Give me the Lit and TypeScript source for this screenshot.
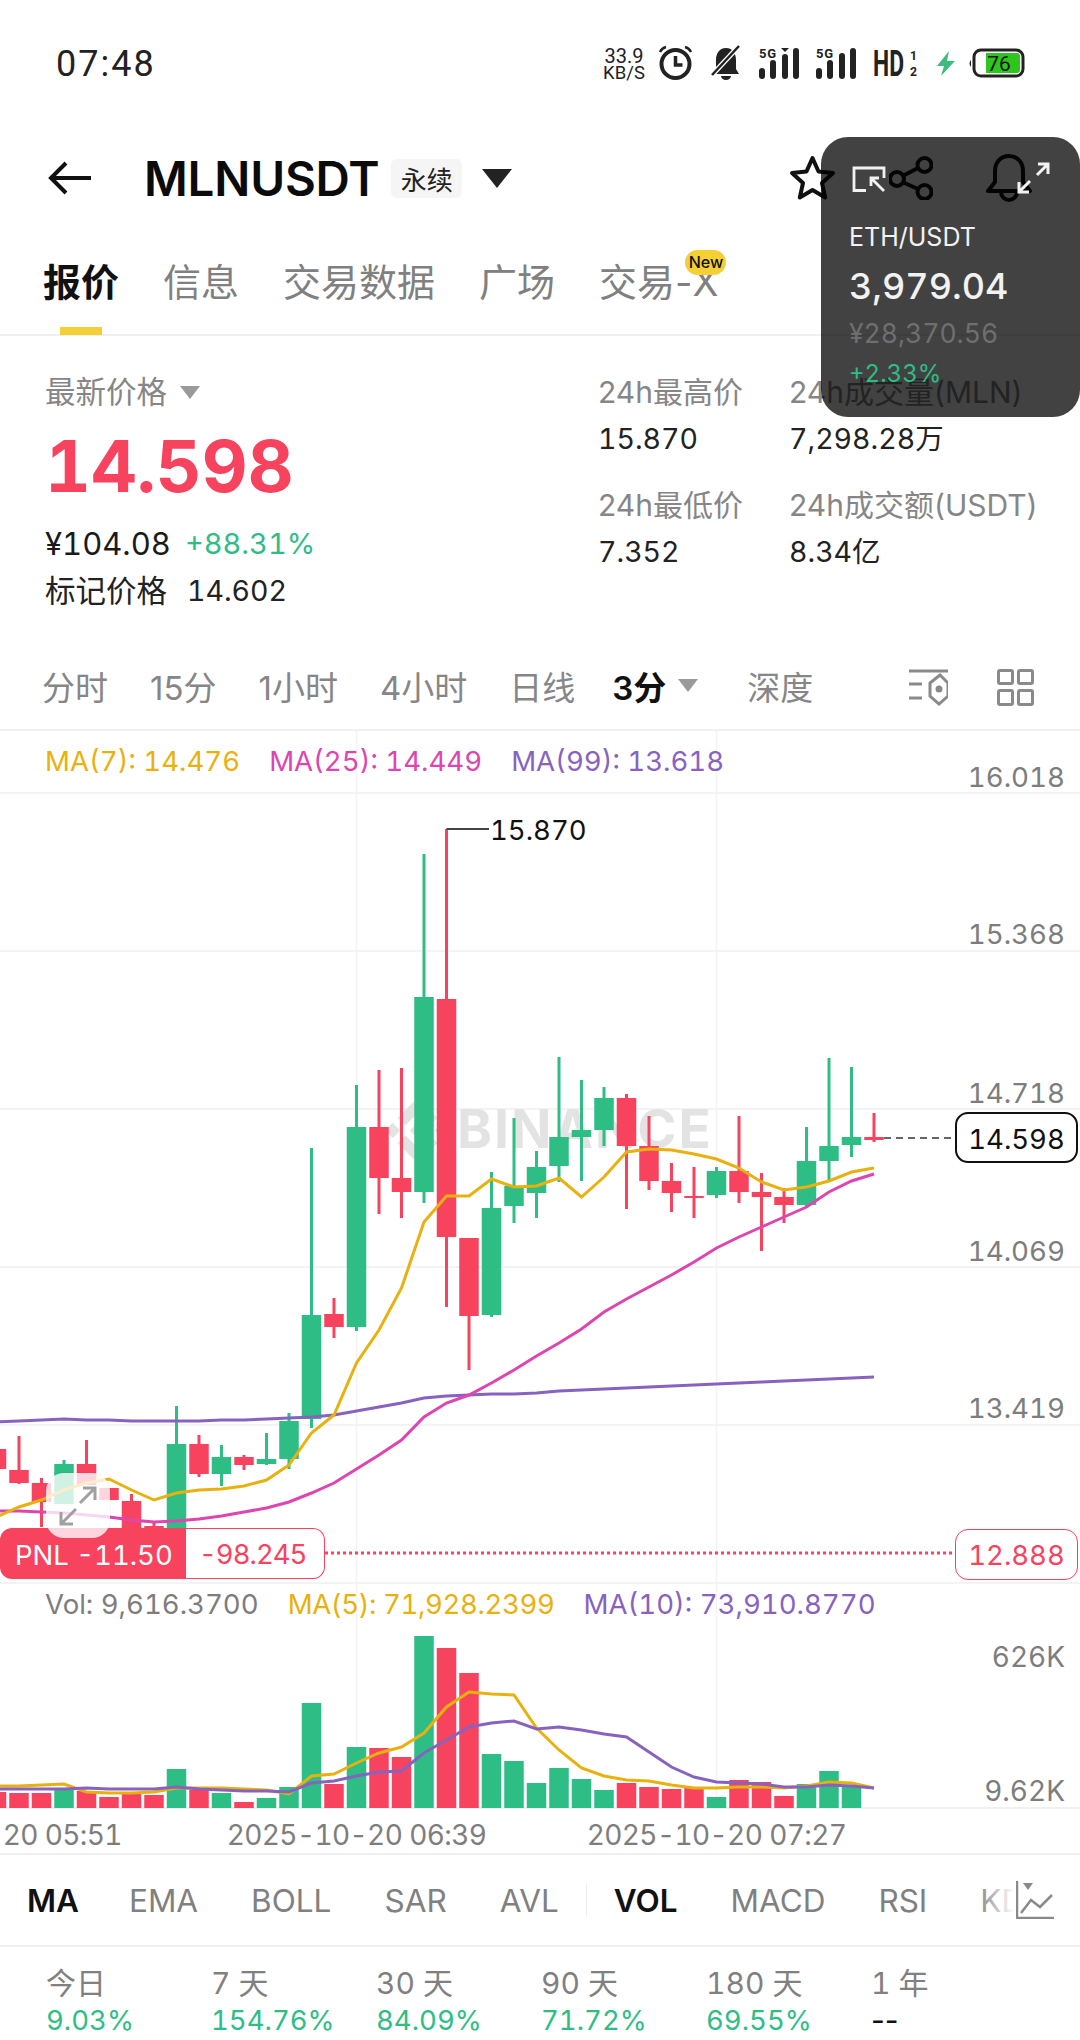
import { LitElement, html, css, svg } from 'lit';
import { customElement } from 'lit/decorators.js';

const GREEN = '#2ebd85';
const RED = '#f8435f';
const YELLOW = '#e8b10f';
const PINK = '#dd45b0';
const PURPLE = '#8763bf';

// index 0 is the newest bar, x runs right to left. y values are page pixels.
const xAt = (k: number) => 874 - 22.5 * k;

// [wick top, body top, body bottom, wick bottom, up]
const CANDLES: [number, number, number, number, boolean][] = [
  [1113, 1137, 1140, 1142, false],
  [1067, 1137, 1145, 1157, true],
  [1058, 1146, 1161, 1180, true],
  [1127, 1161, 1205, 1208, true],
  [1188, 1197, 1205, 1223, false],
  [1173, 1192, 1197, 1251, false],
  [1116, 1171, 1192, 1203, false],
  [1167, 1171, 1195, 1198, true],
  [1167, 1196, 1198, 1218, false],
  [1163, 1181, 1193, 1212, false],
  [1116, 1146, 1181, 1190, false],
  [1094, 1098, 1146, 1209, false],
  [1087, 1098, 1130, 1146, true],
  [1080, 1130, 1137, 1181, true],
  [1057, 1137, 1166, 1182, true],
  [1151, 1167, 1193, 1218, true],
  [1118, 1186, 1206, 1223, true],
  [1172, 1208, 1315, 1317, true],
  [1238, 1238, 1316, 1370, false],
  [829, 999, 1237, 1307, false],
  [854, 997, 1192, 1203, true],
  [1068, 1178, 1192, 1218, false],
  [1070, 1127, 1178, 1214, false],
  [1085, 1127, 1327, 1331, true],
  [1298, 1314, 1327, 1338, false],
  [1148, 1315, 1419, 1428, true],
  [1413, 1421, 1459, 1469, true],
  [1433, 1459, 1464, 1465, true],
  [1455, 1457, 1465, 1470, false],
  [1445, 1457, 1474, 1486, true],
  [1435, 1444, 1474, 1477, false],
  [1406, 1444, 1528, 1528, true],
  [1523, 1526, 1528, 1528, false],
  [1494, 1501, 1528, 1528, false],
  [1488, 1488, 1500, 1500, false],
  [1440, 1464, 1485, 1485, false],
  [1460, 1464, 1504, 1504, true],
  [1478, 1483, 1502, 1527, false],
  [1436, 1470, 1483, 1484, false],
  [1440, 1449, 1469, 1470, false],
];

const MA7 = [1168, 1172, 1181, 1187, 1190, 1182, 1168, 1159, 1154, 1150, 1149, 1152, 1177, 1197, 1178, 1186, 1187, 1179, 1196, 1196, 1222, 1288, 1330, 1363, 1415, 1433, 1465, 1480, 1486, 1489, 1490, 1493, 1500, 1490, 1479, 1483, 1490, 1500, 1507, 1517];
const MA25 = [1174, 1181, 1192, 1207, 1217, 1227, 1237, 1248, 1262, 1275, 1287, 1299, 1312, 1329, 1343, 1356, 1370, 1383, 1395, 1403, 1417, 1440, 1455, 1469, 1483, 1493, 1502, 1508, 1512, 1516, 1519, 1521, 1522, 1520, 1517, 1515, 1513, 1512, 1511, 1511];
const MA99 = [1377, 1378, 1379, 1380, 1381, 1382, 1383, 1384, 1385, 1386, 1387, 1388, 1389, 1390, 1391, 1393, 1394, 1394, 1395, 1396, 1398, 1403, 1407, 1411, 1415, 1417, 1418, 1419, 1420, 1420, 1421, 1421, 1421, 1421, 1420, 1420, 1419, 1420, 1421, 1422];

const VOL = [1808, 1786, 1771, 1784, 1796, 1782, 1780, 1797, 1787, 1789, 1787, 1783, 1790, 1779, 1768, 1783, 1761, 1754, 1673, 1648, 1636, 1757, 1748, 1747, 1784, 1703, 1787, 1798, 1802, 1793, 1790, 1769, 1795, 1792, 1797, 1791, 1790, 1793, 1793, 1792];
const VOL_MA5 = [1788, 1783, 1782, 1786, 1788, 1787, 1787, 1788, 1788, 1785, 1781, 1780, 1776, 1768, 1750, 1728, 1695, 1694, 1692, 1707, 1733, 1747, 1753, 1763, 1774, 1776, 1794, 1790, 1789, 1788, 1788, 1788, 1792, 1793, 1793, 1792, 1784, 1785, 1786, 1786];
const VOL_MA10 = [1788, 1786, 1785, 1787, 1787, 1784, 1783, 1782, 1777, 1767, 1752, 1737, 1734, 1730, 1727, 1729, 1721, 1723, 1727, 1740, 1753, 1771, 1772, 1776, 1781, 1783, 1792, 1791, 1791, 1790, 1789, 1787, 1789, 1789, 1789, 1788, 1789, 1789, 1789, 1789];

const GRID_Y = [793, 951, 1109, 1267, 1425, 1583];
const PRICE_LABELS: [string, number][] = [['16.018', 777], ['15.368', 934], ['14.718', 1093], ['14.069', 1251], ['13.419', 1408]];
const DATES: [string, number][] = [['2025-10-20 05:51', -8], ['2025-10-20 06:39', 356.5], ['2025-10-20 07:27', 716.5]];

const linePts = (ys: number[]) => ys.map((y, k) => `${xAt(k)},${y}`).join(' ');

@customElement('app-root')
export class AppRoot extends LitElement {
  static styles = css`
    :host {
      display: block;
      position: relative;
      width: 1080px;
      height: 2040px;
      overflow: hidden;
      background: #fff;
      color: #111;
      font-family: Inter, 'Noto Sans CJK SC', sans-serif;
      font-variant-numeric: tabular-nums;
    }
    svg { display: block; }

    .status {
      height: 126px;
      display: flex;
      align-items: center;
      padding: 1px 0 0 56px;
      box-sizing: border-box;
    }
    .clock { font: 400 36px/1 Roboto, sans-serif; letter-spacing: 2px; color: #222; }
    .status-icons { position: absolute; left: 0; top: 0; }

    .header {
      height: 104px;
      display: flex;
      align-items: center;
      padding: 0 48px;
    }
    .title { margin-left: 52px; font-size: 47.5px; font-weight: 600; color: #0b0b0b; letter-spacing: -0.2px; }
    .tag {
      margin-left: 12px;
      width: 71px;
      height: 39px;
      display: flex;
      align-items: center;
      justify-content: center;
      background: #f5f5f5;
      border-radius: 6px;
      font-size: 26px;
      color: #222;
    }
    .caret { margin-left: 20px; }
    .actions { margin-left: auto; display: flex; align-items: center; gap: 53px; }

    .tabs {
      height: 106px;
      display: flex;
      gap: 44px;
      padding: 0 0 6px 43px;
      border-bottom: 2px solid #f0f0f0;
      box-sizing: border-box;
      align-items: center;
      font-size: 38px;
      font-variant-numeric: normal;
      color: #808080;
    }
    .tab { position: relative; }
    .tab.on { color: #111; font-weight: 700; }
    .tab.on::after {
      content: '';
      position: absolute;
      left: 17px;
      bottom: -28px;
      width: 42px;
      height: 8px;
      background: #f5cf36;
    }
    .new {
      position: absolute;
      right: -8px;
      top: -2px;
      width: 41px;
      height: 25px;
      border-radius: 13px;
      background: #f5cf36;
      color: #111;
      font-size: 16px;
      font-weight: 500;
      line-height: 25px;
      text-align: center;
    }

    .summary {
      height: 306px;
      box-sizing: border-box;
      display: flex;
      padding: 36px 0 0 45px;
    }
    .main { width: 554px; }
    .muted { color: #868686; font-size: 30px; font-variant-numeric: normal; line-height: 40px; white-space: nowrap; }
    .latest { display: flex; align-items: center; gap: 13px; font-size: 30.5px; }
    .price { margin-top: 12px; font-size: 71px; line-height: 84px; font-weight: 700; }
    .fiat { margin-top: 18px; display: flex; align-items: center; gap: 14px; font-size: 31px; line-height: 36px; color: #1a1a1a; }
    .fiat .chg-day { font-size: 29px; }
    .mark { margin-top: 11px; display: flex; gap: 20px; align-items: center; line-height: 36px; font-size: 30.5px; color: #222; }
    .mark b { font-weight: 400; font-size: 28.5px; }
    .stats { display: grid; grid-template-columns: 191px 1fr; margin-left: -1px; }
    .stat-val { margin-top: 7px; margin-bottom: 26px; font-size: 28.5px; line-height: 40px; color: #222; }

    .periods {
      height: 89px;
      box-sizing: border-box;
      display: flex;
      align-items: center;
      gap: 42px;
      padding: 0 46px 0 42px;
      border-bottom: 2px solid #f0f0f0;
      font-size: 33px;
      font-variant-numeric: normal;
      color: #868686;
    }
    .periods .on { color: #111; font-weight: 600; display: flex; align-items: center; gap: 12px; margin: 0 7px 0 -5px; }
    .period-icons { margin: 4px 0 0 auto; display: flex; gap: 49px; }

    .chart { position: relative; height: 1122px; overflow: hidden; }
    .chart svg text { font-family: Inter, sans-serif; font-variant-numeric: tabular-nums; }
    .date { letter-spacing: -0.6px; }
    .legend {
      position: absolute;
      left: 45px;
      display: flex;
      gap: 29px;
      font-size: 27.6px;
      line-height: 36px;
      white-space: nowrap;
    }
    .tight { letter-spacing: -0.4px; }
    .pnl {
      position: absolute;
      left: 0;
      top: 797px;
      height: 51px;
      display: flex;
      font-size: 27.5px;
      line-height: 54px;
    }
    .pnl-left { width: 186px; box-sizing: border-box; padding-left: 15px; color: #fff; border-radius: 12px 0 0 12px; white-space: nowrap; }
    .pnl-right {
      width: 139px;
      box-sizing: border-box;
      padding-left: 13px;
      background: #fff;
      border: 1.5px solid;
      border-left: 0;
      border-radius: 0 12px 12px 0;
      line-height: 51px;
      letter-spacing: -1px;
    }
    .tick {
      position: absolute;
      left: 955px;
      width: 123px;
      height: 51px;
      box-sizing: border-box;
      background: #fff;
      border: 2px solid #111;
      border-radius: 13px;
      font-size: 27.5px;
      line-height: 50px;
      text-align: center;
    }
    .expand {
      position: absolute;
      left: 46px;
      top: 742px;
      width: 64px;
      height: 65px;
      border-radius: 18px;
      background: rgba(255, 255, 255, 0.78);
      box-shadow: 0 0 2px rgba(0, 0, 0, 0.12);
      display: flex;
      align-items: center;
      justify-content: center;
    }

    .indicators {
      position: relative;
      height: 94px;
      box-sizing: border-box;
      display: flex;
      align-items: center;
      padding-left: 27px;
      border-top: 2px solid #f0f0f0;
      border-bottom: 2px solid #f0f0f0;
      font-size: 31.5px;
      color: #808080;
      overflow: hidden;
      white-space: nowrap;
    }
    .ind + .ind { margin-left: 53px; }
    .ind:first-child { margin-right: -3px; }
    .ind.on { color: #111; font-weight: 600; }
    .sep { width: 1px; height: 32px; background: #eee; margin: 0 27px; }
    .fade {
      position: absolute;
      right: 0;
      top: 0;
      bottom: 0;
      width: 104px;
      padding-left: 40px;
      box-sizing: border-box;
      background: linear-gradient(to right, rgba(255, 255, 255, 0), #fff 38px);
      display: flex;
      align-items: center;
    }

    .returns {
      display: grid;
      grid-template-columns: repeat(6, 165px);
      padding: 18px 0 0 46px;
      font-size: 30px;
      line-height: 37px;
      color: #808080;
      white-space: nowrap;
    }
    .returns b { display: block; font-weight: 400; font-size: 27.5px; }
    .returns .none { color: #111; font-variant-numeric: normal; font-size: 30px; }

    .float {
      position: absolute;
      left: 821px;
      top: 137px;
      width: 259px;
      height: 280px;
      box-sizing: border-box;
      padding: 82px 0 0 28px;
      border-radius: 27px;
      background: rgba(0, 0, 0, 0.74);
      color: #f2f2f2;
      white-space: nowrap;
    }
    .float-icons { position: absolute; left: 0; top: 0; }
    .pair { font-size: 25px; line-height: 36px; }
    .last { margin-top: 9px; font-size: 36px; line-height: 44px; font-weight: 500; }
    .cny { margin-top: 3px; font-size: 26.5px; line-height: 44px; color: #6f6f6f; }
    .chg { margin-top: 1px; font-size: 24px; line-height: 36px; }
  `;

  private renderStatusIcons() {
    const bars = (x: number, mark: boolean) => svg`
      <text x=${x} y="58" font-size="13" font-weight="700" font-family="Roboto, sans-serif" fill="#222" textLength="17">5G</text>
      <rect x=${x} y="68" width="6" height="11" rx="3" fill="#222" />
      <rect x=${x + 11} y="60" width="6" height="19" rx="3" fill="#222" />
      <rect x=${x + 23} y=${mark ? 54 : 53} width="6" height=${mark ? 25 : 26} rx="3" fill="#222" />
      <rect x=${x + 34} y="48" width="6" height="31" rx="3" fill="#222" />
      ${mark ? svg`<path d="M${x + 22} 48 h8 l-4 4z" fill="#222" />` : ''}
    `;
    return html`<svg class="status-icons" width="1080" height="126" viewBox="0 0 1080 126">
      <text x="624" y="63" text-anchor="middle" font-size="20" font-family="Roboto, sans-serif" fill="#222">33.9</text>
      <text x="624" y="79" text-anchor="middle" font-size="18.5" font-family="Roboto, sans-serif" fill="#222">KB/S</text>
      <!-- alarm -->
      <circle cx="675.5" cy="64" r="14" fill="none" stroke="#222" stroke-width="4" />
      <path d="M675.5 56v9h7" fill="none" stroke="#222" stroke-width="3.5" />
      <path d="M660 52q2-4 6-5M691 52q-2-4-6-5" fill="none" stroke="#222" stroke-width="2.5" />
      <!-- muted bell -->
      <path d="M726 48c-7 0-10 6-10 12v9l-3 5h26l-3-5v-9c0-6-3-12-10-12z" fill="#222" />
      <path d="M721 76h10a5 4 0 0 1-10 0z" fill="#222" />
      <path d="M739 46l-27 29" stroke="#fff" stroke-width="5" />
      <path d="M739 46l-27 29" stroke="#222" stroke-width="2.5" />
      ${bars(759, true)} ${bars(816, false)}
      <text x="873" y="76" font-size="36" font-weight="700" font-family="Roboto, sans-serif" fill="#222" textLength="31" lengthAdjust="spacingAndGlyphs">HD</text>
      <text x="910" y="60" font-size="13" font-weight="700" font-family="Roboto, sans-serif" fill="#222" textLength="7" lengthAdjust="spacingAndGlyphs">1</text>
      <text x="910" y="76" font-size="13" font-weight="700" font-family="Roboto, sans-serif" fill="#222" textLength="7" lengthAdjust="spacingAndGlyphs">2</text>
      <path d="M949 51l-12 15h7l-3 10 14-15h-8z" fill="#3fbb7c" />
      <!-- battery -->
      <path d="M971 60v7q-3-3.5 0-7z" fill="#222" />
      <rect x="974" y="50" width="49" height="26" rx="7" fill="#fff" stroke="#222" stroke-width="3" />
      <path d="M986 53h31a3 3 0 0 1 3 3v14a3 3 0 0 1-3 3h-31z" fill="#2ec51d" />
      <text x="999" y="71" text-anchor="middle" font-size="21" font-family="Roboto, sans-serif" fill="#111">76</text>
    </svg>`;
  }

  private renderChart() {
    const w = 19.5;
    return html`<svg width="1080" height="1122" viewBox="0 731 1080 1122">
      ${GRID_Y.map((y) => svg`<line x1="0" x2="1080" y1=${y} y2=${y} stroke="#f3f3f3" stroke-width="2" />`)}
      <line x1="0" x2="1080" y1="1808" y2="1808" stroke="#f0f0f0" stroke-width="2" />
      <line x1="356.5" x2="356.5" y1="731" y2="1808" stroke="#f3f3f3" stroke-width="1.5" />
      <line x1="716.5" x2="716.5" y1="731" y2="1808" stroke="#f3f3f3" stroke-width="1.5" />

      <g transform="translate(385 1098) scale(2.03)" fill="#e3e3e3">
        <path d="M16 0l9.8 9.8-3.8 3.8-6-6-6 6-3.8-3.8zM16 32l9.8-9.8-3.8-3.8-6 6-6-6-3.8 3.8zM3.8 12.2L7.6 16l-3.8 3.8L0 16zM28.2 12.2L32 16l-3.8 3.8L24.4 16zM16 12.2l3.8 3.8-3.8 3.8-3.8-3.8z" />
      </g>
      <text x="457" y="1148" font-size="53" font-weight="700" letter-spacing="2" fill="#e3e3e3">BINANCE</text>

      ${CANDLES.map(([wt, bt, bb, wb, up], k) => {
        const c = up ? GREEN : RED;
        const x = xAt(k);
        return svg`
          <rect x=${x - 1.5} y=${wt} width="3" height=${wb - wt} fill=${c} />
          <rect x=${x - w / 2} y=${bt} width=${w} height=${Math.max(bb - bt, 2)} fill=${c} />`;
      })}

      <polyline points=${linePts(MA99)} fill="none" stroke=${PURPLE} stroke-width="3" />
      <polyline points=${linePts(MA25)} fill="none" stroke=${PINK} stroke-width="3" />
      <polyline points=${linePts(MA7)} fill="none" stroke=${YELLOW} stroke-width="3" />

      <path d="M446.5 829H489" stroke="#444" stroke-width="2" />
      <text x="490" y="840" font-size="27.5" fill="#111">15.870</text>
      <path d="M884 1138H955" stroke="#333" stroke-width="1.5" stroke-dasharray="7 5" />
      <path d="M325 1553H955" stroke=${RED} stroke-width="3" stroke-dasharray="3 3" />

      ${PRICE_LABELS.map(([t, y]) => svg`<text x="1065" y=${y + 10} text-anchor="end" font-size="27.7" fill="#7d7d7d">${t}</text>`)}

      ${VOL.map((top, k) => k === 0 ? '' : svg`<rect x=${xAt(k) - w / 2} y=${top} width=${w} height=${1808 - top} fill=${CANDLES[k][4] ? GREEN : RED} />`)}
      <polyline points=${linePts(VOL_MA5)} fill="none" stroke=${YELLOW} stroke-width="3" />
      <polyline points=${linePts(VOL_MA10)} fill="none" stroke=${PURPLE} stroke-width="3" />
      <text x="1065" y="1667" text-anchor="end" font-size="28" fill="#7d7d7d">626K</text>
      <text x="1065" y="1801" text-anchor="end" font-size="28" fill="#7d7d7d">9.62K</text>
      ${DATES.map(([t, x]) => svg`<text class="date" x=${x} y="1845" text-anchor="middle" font-size="28" fill="#7d7d7d">${t}</text>`)}
    </svg>`;
  }

  render() {
    return html`
      <div class="status"><span class="clock">07:48</span></div>
      ${this.renderStatusIcons()}

      <div class="header">
        <svg width="44" height="34" viewBox="0 0 44 34"><path d="M43 17H3M18 2L3 17l15 15" fill="none" stroke="#111" stroke-width="4" /></svg>
        <span class="title">MLNUSDT</span>
        <span class="tag">永续</span>
        <svg class="caret" width="30" height="19" viewBox="0 0 30 19"><path d="M0 0h30L15 19z" fill="#222" /></svg>
        <div class="actions">
          <svg width="47" height="46" viewBox="0 0 47 46"><path d="M23.5 3l6 13.5 14.5 1.5-11 10 3.2 14.5-12.7-7.5-12.7 7.5L14 28 3 18l14.5-1.5z" fill="none" stroke="#111" stroke-width="4" stroke-linejoin="round" /></svg>
          <svg width="44" height="44" viewBox="0 0 44 44"><g fill="none" stroke="#111" stroke-width="4"><circle cx="35.5" cy="9" r="7" /><circle cx="8" cy="23" r="7" /><circle cx="35.5" cy="36" r="7" /><path d="M14.5 19.5L29 12M14.5 26.5L29 33" /></g></svg>
          <svg width="46" height="48" viewBox="0 0 46 48"><g fill="none" stroke="#111" stroke-width="4" stroke-linejoin="round"><path d="M23 2c-9 0-14 7-14 15v11l-7 9h42l-7-9V17c0-8-5-15-14-15z" /><path d="M15 38a8 8 0 0 0 16 0" /></g></svg>
        </div>
      </div>

      <div class="tabs">
        <span class="tab on">报价</span>
        <span class="tab">信息</span>
        <span class="tab">交易数据</span>
        <span class="tab">广场</span>
        <span class="tab">交易-X<span class="new">New</span></span>
      </div>

      <div class="summary">
        <div class="main">
          <div class="muted latest">最新价格 <svg width="20" height="13" viewBox="0 0 20 13"><path d="M0 0h20L10 13z" fill="#9a9a9a" /></svg></div>
          <div class="price" style="color:${RED}">14.598</div>
          <div class="fiat"><span>¥104.08</span><span class="chg-day" style="color:${GREEN}">+88.31%</span></div>
          <div class="mark"><span>标记价格</span><b>14.602</b></div>
        </div>
        <div class="stats">
          <div>
            <div class="muted">24h最高价</div>
            <div class="stat-val">15.870</div>
            <div class="muted">24h最低价</div>
            <div class="stat-val">7.352</div>
          </div>
          <div>
            <div class="muted">24h成交量(MLN)</div>
            <div class="stat-val">7,298.28万</div>
            <div class="muted">24h成交额(USDT)</div>
            <div class="stat-val">8.34亿</div>
          </div>
        </div>
      </div>

      <div class="periods">
        <span>分时</span><span>15分</span><span>1小时</span><span>4小时</span><span>日线</span>
        <span class="on">3分 <svg width="20" height="13" viewBox="0 0 20 13"><path d="M0 0h20L10 13z" fill="#9a9a9a" /></svg></span>
        <span>深度</span>
        <div class="period-icons">
          <svg width="39" height="37" viewBox="0 0 39 37"><g fill="none" stroke="#8a8a8a" stroke-width="3"><path d="M0 2h39M0 15h13M0 29h13" /><path d="M21 14l10-8 8 8v13l-9 8-9-8z" /><circle cx="30" cy="20" r="2" fill="#8a8a8a" /></g></svg>
          <svg width="37" height="37" viewBox="0 0 37 37"><g fill="none" stroke="#8a8a8a" stroke-width="3"><rect x="1.5" y="1.5" width="14" height="13" rx="1.5" /><rect x="21.5" y="1.5" width="14" height="13" rx="1.5" /><rect x="1.5" y="21.5" width="14" height="14" rx="1.5" /><rect x="21.5" y="21.5" width="14" height="14" rx="1.5" /></g></svg>
        </div>
      </div>

      <div class="chart">
        ${this.renderChart()}
        <div class="legend" style="top:12px">
          <span style="color:${YELLOW}">MA(7): 14.476</span>
          <span style="color:${PINK}">MA(25): 14.449</span>
          <span style="color:${PURPLE}">MA(99): 13.618</span>
        </div>
        <div class="legend" style="top:855px">
          <span style="color:#7d7d7d">Vol: 9,616.3700</span>
          <span class="tight" style="color:${YELLOW}">MA(5): 71,928.2399</span>
          <span style="color:${PURPLE}">MA(10): 73,910.8770</span>
        </div>
        <div class="tick" style="top:381px">14.598</div>
        <div class="tick" style="top:798px;color:${RED};border-color:${RED};border-width:1.5px">12.888</div>
        <div class="pnl">
          <div class="pnl-left" style="background:${RED}">PNL -11.50</div>
          <div class="pnl-right" style="color:${RED};border-color:${RED}">-98.245</div>
        </div>
        <div class="expand">
          <svg width="40" height="42" viewBox="0 0 40 42"><path d="M3 39L18 24M3 27v12h12M37 3L22 18M25 3h12v12" fill="none" stroke="#a0a0a0" stroke-width="3" /></svg>
        </div>
      </div>

      <div class="indicators">
        <span class="ind on">MA</span><span class="ind">EMA</span><span class="ind">BOLL</span><span class="ind">SAR</span><span class="ind">AVL</span>
        <span class="sep"></span>
        <span class="ind on">VOL</span><span class="ind">MACD</span><span class="ind">RSI</span><span class="ind">KDJ</span>
        <div class="fade">
          <svg width="38" height="38" viewBox="0 0 38 38"><g fill="none" stroke="#8a8a8a" stroke-width="2.5"><path d="M1 0v37h37" /><path d="M5 32l10-13 9 7 12-12" /></g><path d="M7 2h10l-5 7z" fill="#8a8a8a" /></svg>
        </div>
      </div>

      <div class="returns">
        <div>今日<b style="color:${GREEN}">9.03%</b></div>
        <div>7 天<b style="color:${GREEN}">154.76%</b></div>
        <div>30 天<b style="color:${GREEN}">84.09%</b></div>
        <div>90 天<b style="color:${GREEN}">71.72%</b></div>
        <div>180 天<b style="color:${GREEN}">69.55%</b></div>
        <div>1 年<b class="none">--</b></div>
      </div>

      <div class="float">
        <svg class="float-icons" width="259" height="70" viewBox="821 137 259 70">
          <g fill="none" stroke="#f2f2f2" stroke-width="2.8">
            <path d="M866 190.5h-12v-22.5h30v10" />
            <path d="M884 191l-13-13M871 186v-8h8" />
          </g>
          <path d="M1019 192l11-11M1019 182v10h10M1048 164l-11 11M1038 164h10v10" fill="none" stroke="#f2f2f2" stroke-width="3" />
        </svg>
        <div class="pair">ETH/USDT</div>
        <div class="last">3,979.04</div>
        <div class="cny">¥28,370.56</div>
        <div class="chg" style="color:${GREEN}">+2.33%</div>
      </div>
    `;
  }
}
